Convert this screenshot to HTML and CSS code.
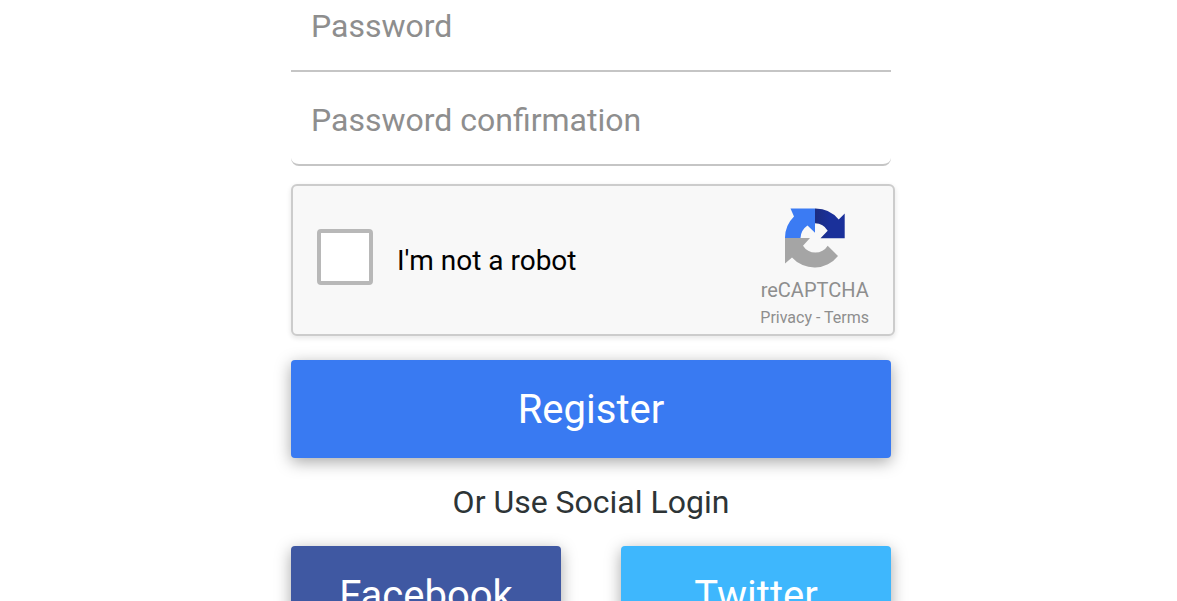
FILE: index.html
```html
<!DOCTYPE html>
<html lang="en">
<head>
<meta charset="utf-8">
<meta name="viewport" content="width=device-width, initial-scale=1">
<title>Register</title>
<link rel="stylesheet" href="styles.css">
</head>
<body>
<main class="page">
  <form class="form">
    <div class="fields">
      <input class="field" type="password" placeholder="Password" aria-label="Password">
      <input class="field field-last" type="password" placeholder="Password confirmation" aria-label="Password confirmation">
    </div>
    <div class="captcha">
      <input class="captcha-box" type="checkbox" id="robot">
      <label class="captcha-label" for="robot">I'm not a robot</label>
      <div class="captcha-brand">
        <svg class="captcha-logo" viewBox="0 0 60 60" aria-hidden="true">
          <defs>
            <linearGradient id="shade" x1="0" x2="1" y1="0" y2="0">
              <stop offset="0" stop-color="#1b2c80"/>
              <stop offset=".5" stop-color="#1a309a"/>
            </linearGradient>
          </defs>
          <path fill="#3b7bf3" d="M0 30A30 30 0 0 1 9 8.500L5.500.5H30V24.700L22.500 17.500A16 16 0 0 0 15.500 30Z"/>
          <path fill="url(#shade)" d="M30 .5A30 30 0 0 1 53.700 11.500L59.700 5.500V30.300H35.500L42.700 22.700A15 15 0 0 0 30 15.300Z"/>
          <path fill="#a5a5a5" d="M0 30H25L18 37.700A14.500 14.500 0 0 0 42.700 37.700L53 48A30 30 0 0 1 7 49.500L0 55.500Z"/>
        </svg>
        <span class="captcha-name">reCAPTCHA</span>
        <span class="captcha-links"><a href="#privacy">Privacy</a> - <a href="#terms">Terms</a></span>
      </div>
    </div>
    <button class="button button-register" type="submit">Register</button>
    <p class="divider">Or Use Social Login</p>
    <div class="social">
      <button class="button button-facebook" type="button">Facebook</button>
      <button class="button button-twitter" type="button">Twitter</button>
    </div>
  </form>
</main>
</body>
</html>
```
FILE: styles.css
```css
* {
  box-sizing: border-box;
}

html {
  overflow: hidden;
}

body {
  margin: 0;
  background: #fff;
  font-family: Roboto, "Liberation Sans", sans-serif;
}

.page {
  display: flex;
  justify-content: center;
  padding-left: 5px;
}

.form {
  width: 100%;
  max-width: 600px;
  margin-top: -22px;
}

.fields {
  display: flex;
  flex-direction: column;
  margin-bottom: 18px;
}

.field {
  width: 100%;
  height: 94px;
  padding: 4px 20px 0;
  border: 0 solid #c5c5c5;
  border-bottom-width: 2px;
  border-radius: 0;
  outline: 0;
  background: transparent;
  color: #2d3436;
  font: 400 32px/40px Roboto, "Liberation Sans", sans-serif;
}

.field-last {
  border-radius: 0 0 8px 8px;
}

.field::placeholder {
  color: #8e8e8e;
  opacity: 1;
}

.captcha {
  display: flex;
  align-items: center;
  height: 152px;
  margin: 0 -4px 24px 0;
  padding: 0 24px;
  border: 2px solid #ccc;
  border-radius: 6px;
  background: #f8f8f8;
  box-shadow: 0 2px 4px 1px rgba(0, 0, 0, 0.08);
}

.captcha-box {
  appearance: none;
  flex: none;
  width: 56px;
  height: 56px;
  margin: 0 24px 6px 0;
  border: 4px solid #b8b8b8;
  border-radius: 4px;
  background: #fff;
}

.captcha-label {
  flex: 1;
  padding-top: 2px;
  color: #000;
  font-size: 28px;
  line-height: 34px;
}

.captcha-brand {
  display: flex;
  flex-direction: column;
  align-items: center;
  align-self: flex-start;
  padding-top: 22px;
  color: #8e8e8e;
}

.captcha-logo {
  width: 60px;
  height: 60px;
}

.captcha-name {
  margin-top: 10px;
  font-size: 20px;
  line-height: 24px;
}

.captcha-links {
  margin-top: 6px;
  font-size: 16px;
  line-height: 20px;
}

.captcha-links a {
  color: inherit;
  text-decoration: none;
}

.button {
  width: 100%;
  height: 98px;
  padding: 2px 0 0;
  border: 0;
  border-radius: 4px;
  box-shadow: 0 4px 16px rgba(0, 0, 0, 0.35);
  color: #fff;
  font: 400 40px/48px Roboto, "Liberation Sans", sans-serif;
}

.button-register {
  display: block;
  background: #397af2;
}

.divider {
  margin: 24px 0;
  color: #2d3436;
  font-size: 32px;
  line-height: 40px;
  text-align: center;
}

.social {
  display: grid;
  grid-template-columns: 1fr 1fr;
  gap: 60px;
}

.button-facebook {
  background: #3f58a2;
}

.button-twitter {
  background: #3eb7fd;
}
```
